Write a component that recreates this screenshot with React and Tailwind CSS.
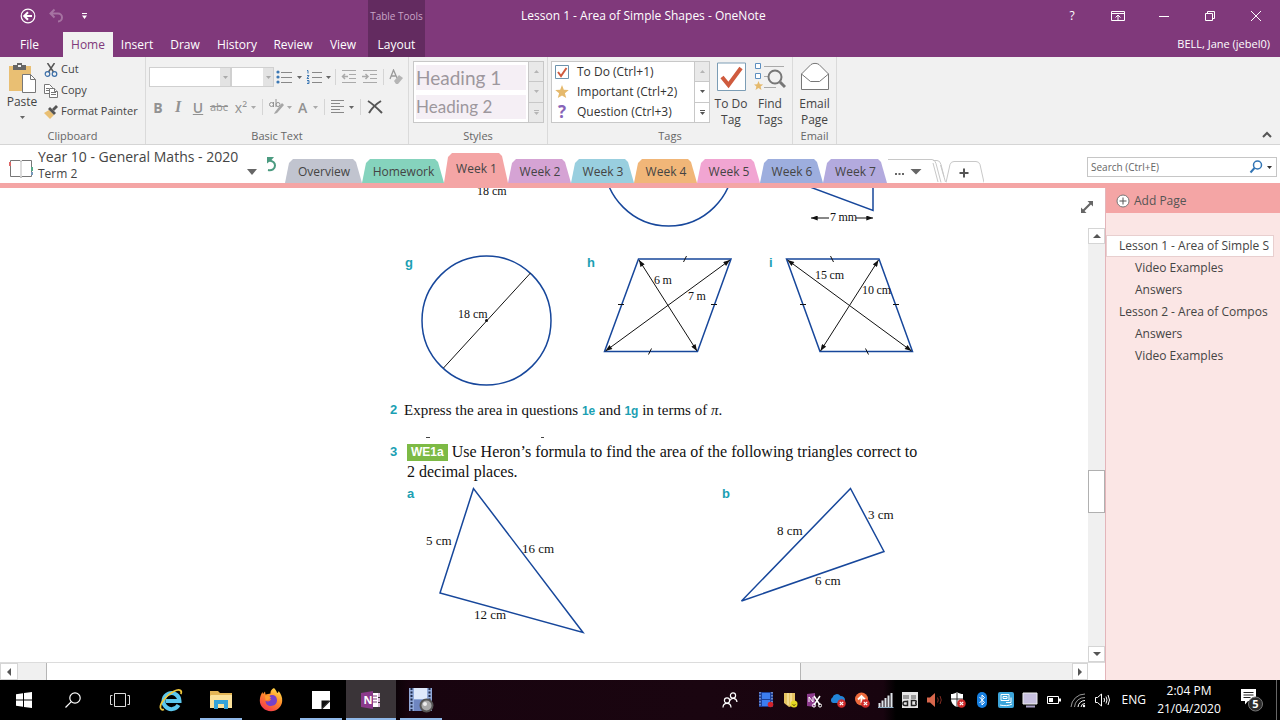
import React, { useState } from "react";

const menuTabs = [
    { name: "Home", width: "w-[50px]" },
    { name: "Insert", width: "w-12" },
    { name: "Draw", width: "w-12" },
    { name: "History", width: "w-14" },
    { name: "Review", width: "w-14" },
    { name: "View", width: "w-11" },
];

const sections = [
    { name: "Overview", color: "bg-[#c1c4cf]", width: "w-[78px]" },
    { name: "Homework", color: "bg-[#85d3bd]", width: "w-[83px]" },
    { name: "Week 1", color: "bg-[#f4a5a5]", width: "w-[65px]" },
    { name: "Week 2", color: "bg-[#d5a3d4]", width: "w-16" },
    { name: "Week 3", color: "bg-[#99cfdf]", width: "w-16" },
    { name: "Week 4", color: "bg-[#f1b678]", width: "w-16" },
    { name: "Week 5", color: "bg-[#f1a5d2]", width: "w-16" },
    { name: "Week 6", color: "bg-[#9daede]", width: "w-16" },
    { name: "Week 7", color: "bg-[#b3aade]", width: "w-[65px]" },
];

const pages = [
    { name: "Lesson 1 - Area of Simple S", sub: false },
    { name: "Video Examples", sub: true },
    { name: "Answers", sub: true },
    { name: "Lesson 2 - Area of Compos", sub: false },
    { name: "Answers", sub: true },
    { name: "Video Examples", sub: true },
];

function Caret({ className = "text-[#666]" }) {
    return (
        <svg viewBox="0 0 5 3" className={`h-[3px] w-[5px] shrink-0 ${className}`} fill="currentColor">
            <path d="M0 0h5L2.5 3z" />
        </svg>
    );
}

function Separator() {
    return <span className="h-4 w-px shrink-0 bg-[#d5d5d5]" />;
}

function TitleBar() {
    const [active, setActive] = useState("Home");

    return (
        <header className="flex h-[57px] shrink-0 bg-[#80397b] text-[12px] text-white">
            <div className="flex w-[368px] shrink-0 flex-col">
                <div className="flex h-8 items-center gap-3 pl-5">
                    <button aria-label="Back">
                        <svg viewBox="0 0 16 16" className="h-4 w-4" fill="none" stroke="currentColor">
                            <circle cx="8" cy="8" r="6.8" strokeWidth="1.2" />
                            <path d="M12 8H4.5M8 4.2 4.2 8 8 11.8" strokeWidth="2" />
                        </svg>
                    </button>
                    <button aria-label="Undo" className="text-[#a673a2]">
                        <svg viewBox="0 0 16 16" className="h-4 w-4" fill="none" stroke="currentColor" strokeWidth="2">
                            <path d="M2.5 5.5h7.5a4 4 0 0 1 0 8M6.5 1.5l-4 4 4 4" />
                        </svg>
                    </button>
                    <button aria-label="Customize toolbar" className="ml-[6px]">
                        <svg viewBox="0 0 5 6" className="h-[6px] w-[5px]" fill="currentColor">
                            <path d="M0 0h5v1H0zM0 2.5h5L2.5 6z" />
                        </svg>
                    </button>
                </div>
                <nav className="flex flex-1 items-stretch">
                    <button className="mr-1 w-[59px]">File</button>
                    {menuTabs.map((tab) => (
                        <button
                            key={tab.name}
                            onClick={() => setActive(tab.name)}
                            className={`${tab.width} ${active === tab.name ? "bg-[#f1f1f1] text-[#80397b]" : ""}`}
                        >
                            {tab.name}
                        </button>
                    ))}
                </nav>
            </div>
            <div className="flex w-[57px] shrink-0 flex-col items-center bg-[#632b60]">
                <div className="flex h-8 items-center whitespace-nowrap text-[10px] text-[#c9a5c7]">Table Tools</div>
                <button className="flex-1">Layout</button>
            </div>
            <h1 className="flex h-8 flex-1 items-center pl-24">Lesson 1 - Area of Simple Shapes - OneNote</h1>
            <div className="flex w-[240px] shrink-0 flex-col">
                <div className="flex h-8 items-center justify-end gap-[30px] pr-4">
                    <button className="w-4 text-[12px]">?</button>
                    <button aria-label="Ribbon display options">
                        <svg viewBox="0 0 16 16" className="h-4 w-4" fill="none" stroke="currentColor">
                            <path d="M1.5 3.5h13v9h-13zM1.5 5.5h13M8 12V7M5.5 9.5 8 7l2.5 2.5" />
                        </svg>
                    </button>
                    <button aria-label="Minimize">
                        <svg viewBox="0 0 16 16" className="h-4 w-4" stroke="currentColor">
                            <path d="M3 8.5h10" />
                        </svg>
                    </button>
                    <button aria-label="Restore">
                        <svg viewBox="0 0 16 16" className="h-4 w-4" fill="none" stroke="currentColor">
                            <path d="M3.5 5.5h7v7h-7zM5.5 5.5v-2h7v7h-2" />
                        </svg>
                    </button>
                    <button aria-label="Close">
                        <svg viewBox="0 0 16 16" className="h-4 w-4" stroke="currentColor">
                            <path d="m3 3 10 10M13 3 3 13" />
                        </svg>
                    </button>
                </div>
                <div className="flex flex-1 items-center justify-end pr-[10px] text-[11px]">BELL, Jane (jebel0)</div>
            </div>
        </header>
    );
}

function Group({ label, className, children }) {
    return (
        <section className={`flex shrink-0 flex-col border-r border-[#dadada] ${className}`}>
            <div className="flex-1">{children}</div>
            <div className="h-4 text-center text-[11px] leading-4 text-[#666]">{label}</div>
        </section>
    );
}

function ClipboardGroup() {
    return (
        <Group label="Clipboard" className="w-[146px]">
            <div className="flex pt-[2px]">
                <button className="flex w-11 shrink-0 flex-col items-center pt-1">
                    <svg viewBox="0 0 28 31" className="h-[31px] w-7">
                        <path d="M1 3h22v25H1z" fill="#e9bf73" />
                        <path d="M5 2h4V0h5v2h4v5H5z" fill="#666" />
                        <path d="M10 2h3v2h-3z" fill="#f1f1f1" />
                        <path d="M14.5 11.5h8l5 5v13h-13z" fill="#fff" stroke="#777" />
                        <path d="M22.5 11.5v5h5" fill="none" stroke="#777" />
                    </svg>
                    <span className="text-[12px] leading-4">Paste</span>
                    <Caret className="mt-[6px] text-[#666]" />
                </button>
                <div className="flex flex-col text-[11px] whitespace-nowrap">
                    <button className="flex h-[21px] items-center gap-[3px]">
                        <svg viewBox="0 0 14 14" className="h-[14px] w-[14px]" fill="none">
                            <path d="M3.5 0 9.5 9M10.5 0 4.5 9" stroke="#555" strokeWidth="1.5" />
                            <circle cx="3.5" cy="11" r="2.3" stroke="#3c6fa8" strokeWidth="1.2" />
                            <circle cx="10.5" cy="11" r="2.3" stroke="#3c6fa8" strokeWidth="1.2" />
                        </svg>
                        Cut
                    </button>
                    <button className="flex h-[21px] items-center gap-[3px]">
                        <svg viewBox="0 0 14 14" className="h-[14px] w-[14px]" fill="#fff" stroke="#777">
                            <path d="M.5.5h5l3 3v6h-8z" />
                            <path d="M2 4.5h3M2 6.5h3" />
                            <path d="M5.5 4.5h5l3 3v6h-8z" />
                            <path d="M7 8.5h5M7 10.5h5M10.5 4.5v3h3" />
                        </svg>
                        Copy
                    </button>
                    <button className="flex h-[21px] items-center gap-[3px]">
                        <svg viewBox="0 0 14 14" className="h-[14px] w-[14px]">
                            <path d="m0 8 5-3 5 5-4 4z" fill="#e9bf73" />
                            <path d="m4 4 2-2 6 6-2 2z" fill="#555" />
                            <path d="m8 4 4-4 2 2-4 4z" fill="#555" />
                        </svg>
                        Format Painter
                    </button>
                </div>
            </div>
        </Group>
    );
}

function FontSelect({ label, className }) {
    return (
        <span className={`relative flex h-5 shrink-0 items-stretch border border-[#d0d0d0] ${className}`}>
            <select aria-label={label} className="w-full appearance-none bg-white" />
            <span className="pointer-events-none absolute inset-y-0 right-0 flex w-[10px] items-center justify-center bg-[#e3e3e3]">
                <Caret className="text-[#aaa]" />
            </span>
        </span>
    );
}

function BasicTextGroup() {
    return (
        <Group label="Basic Text" className="w-[263px]">
            <div className="mt-[10px] flex h-5 items-center pl-[3px]">
                <FontSelect label="Font" className="w-[82px]" />
                <FontSelect label="Font size" className="w-[43px]" />
                <button aria-label="Bullets" className="ml-[2px] flex items-center gap-[5px]">
                    <svg viewBox="0 0 16 16" className="h-4 w-4">
                        <path d="M5 3.5h11M5 8.5h11M5 13.5h11" stroke="#888" />
                        <g fill="#3c78b4">
                            <circle cx="2" cy="3" r="1.6" />
                            <circle cx="2" cy="8" r="1.6" />
                            <circle cx="2" cy="13" r="1.6" />
                        </g>
                    </svg>
                    <Caret />
                </button>
                <button aria-label="Numbering" className="ml-[4px] flex items-center gap-[4px]">
                    <svg viewBox="0 0 16 16" className="h-4 w-4" fill="none">
                        <path d="M6 3.5h10M6 8.5h10M6 13.5h10" stroke="#888" />
                        <path d="M1 1.5h1v3M1 6.5h2l-2 3h2M1 11.5h2v3H1M1.5 13h1" stroke="#3c78b4" />
                    </svg>
                    <Caret />
                </button>
                <span className="ml-1 flex items-center gap-[5px]">
                    <Separator />
                    <button aria-label="Decrease indent">
                        <svg viewBox="0 0 16 16" className="h-4 w-4" stroke="#aaa" fill="none">
                            <path d="M1 1.5h14M8 5.5h7M8 9.5h7M1 13.5h14" />
                            <path d="M1.5 7.5H7M4 5 1.5 7.5 4 10" strokeWidth="1.5" />
                        </svg>
                    </button>
                    <button aria-label="Increase indent">
                        <svg viewBox="0 0 16 16" className="h-4 w-4" stroke="#aaa" fill="none">
                            <path d="M1 1.5h14M8 5.5h7M8 9.5h7M1 13.5h14" />
                            <path d="M0 7.5h6M3.5 5 6 7.5 3.5 10" strokeWidth="1.5" />
                        </svg>
                    </button>
                    <Separator />
                    <button aria-label="Clear formatting">
                        <svg viewBox="0 0 16 16" className="h-4 w-4" fill="none">
                            <path d="m1 10 3.5-9L8 9M2.5 7h4" stroke="#999" strokeWidth="1.3" />
                            <path d="m5 12 5-6 4 3-5 6H7z" fill="#b5b5b5" />
                        </svg>
                    </button>
                </span>
            </div>
            <div className="mt-[10px] flex h-5 items-center pl-[2px] text-[14px] text-[#929292]">
                <button className="w-5 font-bold">B</button>
                <button className="w-5 font-['Liberation_Serif',serif] text-[16px] font-bold italic">I</button>
                <button className="w-5 font-semibold underline">U</button>
                <button className="w-[22px] text-[11px] line-through">abc</button>
                <button className="flex w-[26px] items-center justify-end gap-1">
                    x²
                    <Caret className="text-[#aaa]" />
                </button>
                <span className="ml-[6px] flex items-center gap-[6px]">
                    <Separator />
                    <button aria-label="Highlight" className="flex items-center gap-[2px]">
                        <svg viewBox="0 0 16 16" className="h-4 w-4 overflow-visible" fill="none">
                            <circle cx="2.5" cy="5.5" r="2" stroke="#929292" />
                            <path d="M4.5 3v5M7 0v8" stroke="#929292" />
                            <circle cx="9" cy="5.5" r="2" stroke="#929292" />
                            <path d="m6 13 7-9 2 2-7 8-3 1z" fill="#a5a5a5" />
                        </svg>
                        <Caret className="text-[#aaa]" />
                    </button>
                    <button className="flex items-center gap-[6px] font-semibold">
                        A
                        <Caret className="text-[#aaa]" />
                    </button>
                    <Separator />
                    <button aria-label="Align" className="flex items-center gap-1">
                        <svg viewBox="0 0 14 14" className="h-[14px] w-[14px]" stroke="#888">
                            <path d="M0 .5h13M0 3.5h9M0 6.5h13M0 9.5h9M0 12.5h13" />
                        </svg>
                        <Caret />
                    </button>
                    <Separator />
                    <button aria-label="Delete">
                        <svg viewBox="0 0 16 14" className="h-[14px] w-4" stroke="#555" strokeWidth="2" fill="none">
                            <path d="M1 1c5 3 9 7 14 12M14 1C9 4 5 8 2 13" />
                        </svg>
                    </button>
                </span>
            </div>
        </Group>
    );
}

function GalleryScroll({ disabled }) {
    const arrow = disabled ? "text-[#b5b5b5]" : "text-[#555]";
    const cell = disabled ? "bg-[#e9e9e9]" : "bg-white";
    return (
        <div className="flex w-[15px] shrink-0 flex-col divide-y divide-[#c8c8c8] border-l border-[#c8c8c8]">
            <button aria-label="Scroll up" className="flex flex-1 items-center justify-center bg-[#e9e9e9]">
                <Caret className="rotate-180 text-[#b5b5b5]" />
            </button>
            <button aria-label="Scroll down" className={`flex flex-1 items-center justify-center ${cell}`}>
                <Caret className={arrow} />
            </button>
            <button aria-label="More" className={`flex flex-1 flex-col items-center justify-center gap-px ${cell} ${arrow}`}>
                <span className="h-px w-[5px] bg-current" />
                <Caret className={arrow} />
            </button>
        </div>
    );
}

function StylesGroup() {
    return (
        <Group label="Styles" className="w-[139px]">
            <div className="mt-1 ml-1 flex h-[62px] w-[131px] border border-[#c8c8c8] bg-white">
                <div className="flex flex-1 flex-col justify-between px-[2px] py-[3px] font-[Lato,sans-serif] text-[#9d979d]">
                    <button className="h-[25px] bg-[#f5eff5] text-left text-[19px] leading-6">Heading 1</button>
                    <button className="h-6 bg-[#f5eff5] text-left text-[17px] leading-6">Heading 2</button>
                </div>
                <GalleryScroll disabled />
            </div>
        </Group>
    );
}

function TagsGroup() {
    return (
        <Group label="Tags" className="w-[245px]">
            <div className="flex">
                <div className="mt-1 ml-[3px] flex h-[62px] w-[159px] shrink-0 border border-[#c8c8c8] bg-white text-[#333]">
                    <div className="flex flex-1 flex-col">
                        <button className="flex h-5 items-center gap-[7px] pl-[2px]">
                            <svg viewBox="0 0 16 16" className="h-4 w-4 shrink-0" fill="none">
                                <path d="M1.5 1.5h13v13h-13z" stroke="#6d93ad" fill="#fff" />
                                <path d="m4 8 3 4 5.5-8" stroke="#cf5b3e" strokeWidth="2" />
                            </svg>
                            To Do (Ctrl+1)
                        </button>
                        <button className="flex h-5 items-center gap-[7px] pl-[2px]">
                            <svg viewBox="0 0 16 16" className="h-4 w-4 shrink-0" fill="#e5b96c">
                                <path d="m8 1 1.8 4.7 5 .3-3.9 3.2 1.3 4.9L8 11.4l-4.200 2.700 1.300-4.900L1.200 6l5-.3z" />
                            </svg>
                            Important (Ctrl+2)
                        </button>
                        <button className="flex h-5 items-center gap-[7px] pl-[2px]">
                            <span className="w-4 text-center text-[17px] leading-5 font-bold text-[#8764b8]">?</span>
                            Question (Ctrl+3)
                        </button>
                    </div>
                    <GalleryScroll />
                </div>
                <button className="mt-[5px] flex w-[42px] flex-col items-center text-[12px] leading-4">
                    <svg viewBox="0 0 29 30" className="mb-1 h-[30px] w-[29px]" fill="none">
                        <path d="M.5 1h28v27.5H.5z" fill="#fff" stroke="#7c9db5" />
                        <path d="m5 15 6.5 8L24 6" stroke="#cf5b3e" strokeWidth="4" />
                    </svg>
                    <span>To Do</span>
                    <span>Tag</span>
                </button>
                <button className="mt-[5px] flex w-9 flex-col items-center text-[12px] leading-4">
                    <svg viewBox="0 0 32 30" className="mb-1 h-[30px] w-8" fill="none">
                        <path d="M1.5 1.5h5v5h-5zM1.5 11.5h5v5h-5z" stroke="#5d8fc0" fill="#fff" />
                        <path d="M10 4.5h20M10 14.5h6M10 25.5h12" stroke="#aaa" />
                        <circle cx="21" cy="15" r="6.5" stroke="#777" strokeWidth="2" fill="#f1f1f1" />
                        <path d="m26 20 5 5" stroke="#777" strokeWidth="3" />
                        <path d="m4.5 19 1.3 3.2 3.4.2-2.6 2.2.9 3.4-3-1.9L1.500 28l.9-3.400L0 22.400l3.200-.2z" fill="#e5b96c" />
                    </svg>
                    <span>Find</span>
                    <span>Tags</span>
                </button>
            </div>
        </Group>
    );
}

function EmailGroup() {
    return (
        <Group label="Email" className="w-11">
            <button className="mt-[5px] flex w-full flex-col items-center text-[12px] leading-4">
                <svg viewBox="0 0 30 30" className="mb-1 h-[30px] w-[30px]" fill="#fff" stroke="#777">
                    <path d="M1.5 12 11 2.5c2-1.5 6-1.5 8 0L28.5 12v15.500h-27z" />
                    <path d="m1.5 12 9 7.5h9l9-7.5" fill="none" />
                </svg>
                <span>Email</span>
                <span>Page</span>
            </button>
        </Group>
    );
}

function Ribbon() {
    return (
        <div className="flex h-[88px] shrink-0 border-b border-[#d5d5d5] bg-[#f1f1f1] text-[12px] text-[#444]">
            <ClipboardGroup />
            <BasicTextGroup />
            <StylesGroup />
            <TagsGroup />
            <EmailGroup />
            <button aria-label="Collapse ribbon" className="mr-2 mb-1 ml-auto self-end">
                <svg viewBox="0 0 10 10" className="h-[10px] w-[10px]" fill="none" stroke="#555" strokeWidth="2">
                    <path d="m1 7 4-4 4 4" />
                </svg>
            </button>
        </div>
    );
}

function SectionBar() {
    const [active, setActive] = useState("Week 1");

    return (
        <div className="flex h-[43px] shrink-0 border-b-[5px] border-[#f4a5a5] bg-white text-[#444]">
            <button className="flex w-[257px] shrink-0 items-end pl-2 text-left">
                <svg viewBox="0 0 26 20" className="mb-1 h-5 w-[26px] shrink-0" fill="none" stroke="#777">
                    <path d="M2.5 1.5h9.500l1 1 1-1h9.500v16H14l-1 1-1-1H2.500z" />
                    <path d="M13 3v15" stroke="#bbb" />
                    <path d="M2 3v4" stroke="#d66" strokeWidth="2" />
                    <path d="M24 8v4" stroke="#5a8" strokeWidth="2" />
                    <path d="M24 13v3" stroke="#79b" strokeWidth="2" />
                </svg>
                <span className="ml-1 flex flex-1 flex-col self-start pt-[2px] whitespace-nowrap">
                    <span className="text-[14px] leading-[19px]">Year 10 - General Maths - 2020</span>
                    <span className="text-[12px] leading-4">Term 2</span>
                </span>
                <svg viewBox="0 0 10 6" className="mb-2 h-[6px] w-[10px] shrink-0" fill="#666">
                    <path d="M0 0h10L5 6z" />
                </svg>
            </button>
            <button aria-label="Sync status" className="mr-[6px] ml-[7px] w-[15px]">
                <svg viewBox="0 0 15 18" className="h-[18px] w-[15px]" fill="none" stroke="#4b9b80" strokeWidth="2">
                    <path d="M4 15c4 .8 7-1 7-4.500 0-3-2.500-4.500-6-5" />
                    <path d="M3 2v6.500L7.500 5 10 2z" fill="#4b9b80" stroke="none" />
                </svg>
            </button>
            <nav className="flex items-end text-[12px]">
                {sections.map((s) => (
                    <button
                        key={s.name}
                        onClick={() => setActive(s.name)}
                        className={`-mr-px shrink-0 pt-[2px] [clip-path:polygon(0_100%,4px_4px,8px_0,calc(100%-10px)_0,calc(100%-7px)_3px,calc(100%-1px)_100%)] ${s.width} ${s.color} ${active === s.name ? "h-[30px]" : "h-6"}`}
                    >
                        {s.name}
                    </button>
                ))}
                <button aria-label="More sections" className="ml-px flex h-6 w-[58px] items-center">
                    <svg viewBox="0 0 58 24" className="h-6 w-[58px]" fill="none" stroke="#c8c8c8">
                        <path d="M0 .5h44q3 0 4 4l5 19M45 1.5h4q3 0 4 4l3 12M50 23l-5-19M57.5 23l-5-17" />
                        <g fill="#666" stroke="none">
                            <path d="M7 14h2v2H7zM10.5 14h2v2h-2zM14 14h2v2h-2zM22.5 10h11L28 15.5z" />
                        </g>
                    </svg>
                </button>
                <button aria-label="New section" className="h-6">
                    <svg viewBox="0 0 38 24" className="h-6 w-[38px]" fill="none" stroke="#c8c8c8">
                        <path d="m0 23.5 4-18q1-3 4-3h22q3 0 4 3l4 18" />
                        <path d="M18 9.5v9M13.5 14h9" stroke="#555" strokeWidth="2" />
                    </svg>
                </button>
            </nav>
            <div className="mt-3 mr-[3px] ml-auto flex h-5 w-[190px] shrink-0 items-center border border-[#c6c6c6] pr-1">
                <input
                    type="text"
                    aria-label="Search"
                    placeholder="Search (Ctrl+E)"
                    className="min-w-0 flex-1 pl-[3px] text-[10px] outline-none placeholder:text-[#666]"
                />
                <button aria-label="Search notes" className="flex items-center gap-1">
                    <svg viewBox="0 0 14 14" className="h-[14px] w-[14px]" fill="none" stroke="#3174b4">
                        <circle cx="8.5" cy="5" r="4" strokeWidth="1.5" />
                        <path d="M5.5 8 1.5 12.5" strokeWidth="2" />
                    </svg>
                    <Caret className="text-[#333]" />
                </button>
            </div>
        </div>
    );
}

// Questions 1d to 1i
function AreaFigures() {
    return (
        <svg viewBox="388 188 560 210" className="block h-[210px] w-[560px]" fill="none">
            <defs>
                <marker id="tip" viewBox="0 0 8 6" refX="8" refY="3" markerWidth="8" markerHeight="5" orient="auto-start-reverse">
                    <path d="M0 0 8 3 0 6z" fill="#111" />
                </marker>
            </defs>
            <g stroke="#17479b" strokeWidth="1.5">
                <circle cx="668.7" cy="161.5" r="64.5" />
                <path d="M810 187l63 23.5V180" />
                <circle cx="486.5" cy="320.5" r="64.5" />
                <path d="M638.5 259h92.5l-33.5 92.5h-93z" />
                <path d="M786.5 259H879l33.5 92.5H820z" />
            </g>
            <g stroke="#111" strokeWidth="1">
                <path d="M530.5 273 443.5 368" />
                <path d="M683.5 262l3-6M648.5 354.5l3-6M618 304.5h6M711 304.5h6" />
                <path d="M830.5 256l3 6M865.5 348.5l3 6M800 304.5h6M893 304.5h6" />
                <path d="M639 260l58 91" markerStart="url(#tip)" markerEnd="url(#tip)" />
                <path d="M730 260 605.5 351" markerStart="url(#tip)" markerEnd="url(#tip)" />
                <path d="M787.5 260l124 91" markerStart="url(#tip)" markerEnd="url(#tip)" />
                <path d="M878.5 260l-58 91" markerStart="url(#tip)" markerEnd="url(#tip)" />
                <path d="M829 218h-18" markerEnd="url(#tip)" />
                <path d="M856 218h17" markerEnd="url(#tip)" />
            </g>
            <circle cx="486.5" cy="320.5" r="1.5" fill="#111" />
            <g className="font-['Liberation_Serif',serif] text-[12px]" fill="#111">
                <text x="477" y="195">18 cm</text>
                <text x="830" y="221">7&#8201;mm</text>
                <text x="458" y="318">18 cm</text>
                <text x="654" y="284">6&#8201;m</text>
                <text x="688" y="300">7&#8201;m</text>
                <text x="815" y="279">15&#8201;cm</text>
                <text x="862" y="294">10&#8201;cm</text>
            </g>
            <g className="font-['Liberation_Sans',sans-serif] text-[13px] font-bold" fill="#1b9fb3">
                <text x="405" y="267">g</text>
                <text x="587" y="267">h</text>
                <text x="769" y="267">i</text>
            </g>
        </svg>
    );
}

// Question 3 triangles
function TriangleFigures() {
    return (
        <svg viewBox="388 482 560 160" className="block h-40 w-[560px]" fill="none">
            <g stroke="#17479b" strokeWidth="1.5">
                <path d="M473.5 488.5 440 593l143 39.5z" />
                <path d="M850.5 488.5 884 551.5 741.5 601z" />
            </g>
            <g className="font-['Liberation_Serif',serif] text-[13px]" fill="#111">
                <text x="426" y="545">5 cm</text>
                <text x="522" y="553">16 cm</text>
                <text x="474" y="619">12 cm</text>
                <text x="777" y="535">8 cm</text>
                <text x="868" y="519">3 cm</text>
                <text x="815" y="585">6 cm</text>
            </g>
            <g className="font-['Liberation_Sans',sans-serif] text-[13px] font-bold" fill="#1b9fb3">
                <text x="407" y="498">a</text>
                <text x="722" y="498">b</text>
            </g>
        </svg>
    );
}

function Question({ number, className, children }) {
    return (
        <div className={`flex font-['Liberation_Serif',serif] text-[#111] ${className}`}>
            <b className="w-4 shrink-0 pl-[2px] font-['Liberation_Sans',sans-serif] text-[13px] text-[#1b9fb3]">{number}</b>
            {children}
        </div>
    );
}

function ScrollButton({ label, className, rotate }) {
    return (
        <button aria-label={label} className={`flex shrink-0 items-center justify-center border border-[#d5d5d5] bg-white ${className}`}>
            <svg viewBox="0 0 8 4" className={`h-1 w-2 ${rotate}`} fill="#555">
                <path d="M0 4h8L4 0z" />
            </svg>
        </button>
    );
}

function NotePage() {
    return (
        <main className="flex min-w-0 flex-1 flex-col bg-white">
            <div className="relative flex min-h-0 flex-1">
                <div className="min-w-0 flex-1 overflow-hidden pl-[388px]">
                    <AreaFigures />
                    <Question number="2" className="h-6 items-center text-[15px]">
                        <p>
                            Express the area in questions{" "}
                            <b className="font-['Liberation_Sans',sans-serif] text-[12px] text-[#1b9fb3]">1e</b> and{" "}
                            <b className="font-['Liberation_Sans',sans-serif] text-[12px] text-[#1b9fb3]">1g</b> in terms of{" "}
                            <i>π</i>.
                        </p>
                    </Question>
                    {/* leftover edge of the pasted strip above question 3 */}
                    <svg viewBox="0 0 560 20" className="block h-5 w-[560px]" stroke="#444">
                        <path d="M38 15.5h4M153 15.5h3" />
                    </svg>
                    <Question number="3" className="text-[16px] leading-5">
                        <div className="flex flex-col pl-[3px] whitespace-nowrap">
                            <p className="flex items-center gap-1">
                                <b className="bg-[#7dba45] px-1 font-['Liberation_Sans',sans-serif] text-[12px] leading-[17px] text-white">
                                    WE1a
                                </b>
                                Use Heron’s formula to find the area of the following triangles correct to
                            </p>
                            <p>2 decimal places.</p>
                        </div>
                    </Question>
                    <TriangleFigures />
                </div>
                <button aria-label="Full page view" className="absolute top-[13px] right-3">
                    <svg viewBox="0 0 12 12" className="h-3 w-3" fill="#666">
                        <path d="M12 0v5.500l-2-2L3.500 10l2 2H0V6.500l2 2L8.500 2l-2-2z" />
                    </svg>
                </button>
                <div className="mt-10 flex w-[17px] shrink-0 flex-col bg-[#f0f0f0]">
                    <ScrollButton label="Scroll up" className="h-4" rotate="" />
                    <div className="grow-[17]" />
                    <div className="h-[43px] border border-[#b0b0b0] bg-white" />
                    <div className="grow-[10]" />
                    <ScrollButton label="Scroll down" className="h-4" rotate="rotate-180" />
                </div>
            </div>
            <div className="flex h-[18px] shrink-0 border-t border-[#dcdcdc] bg-[#f0f0f0]">
                <ScrollButton label="Scroll left" className="w-[18px]" rotate="-rotate-90" />
                <div className="grow-[1] basis-0" />
                <div className="grow-[27] basis-0 border-x border-[#b5b5b5] bg-white" />
                <div className="grow-[9] basis-5" />
                <ScrollButton label="Scroll right" className="w-4" rotate="rotate-90" />
                <div className="w-[17px] bg-white" />
            </div>
        </main>
    );
}

function PageList() {
    const [current, setCurrent] = useState(0);

    return (
        <aside className="w-[175px] shrink-0 border-l border-[#e3b5ba] bg-[#fbe6e5] text-[12px] text-[#444]">
            <button className="mb-[22px] flex h-[25px] w-full items-center gap-1 bg-[#f4a5a5] pl-[10px] text-[12px] text-[#555]">
                <svg viewBox="0 0 14 14" className="h-[14px] w-[14px]" fill="#fff" stroke="#777">
                    <circle cx="7" cy="7" r="6" />
                    <path d="M7 3.5v7M3.5 7h7" stroke="#555" />
                </svg>
                Add Page
            </button>
            <ul className="mr-[6px]">
                {pages.map((page, i) => (
                    <li key={i}>
                        <button
                            onClick={() => setCurrent(i)}
                            className={`block h-[22px] w-full border text-left leading-5 whitespace-nowrap ${page.sub ? "pl-7" : "pl-3"} ${current === i ? "border-[#e8cfcf] bg-white" : "border-transparent"}`}
                        >
                            {page.name}
                        </button>
                    </li>
                ))}
            </ul>
        </aside>
    );
}

function TaskButton({ label, className = "w-[50px]", open, active, children }) {
    return (
        <button aria-label={label} className={`relative flex h-full shrink-0 items-center justify-center ${className} ${active ? "bg-[#3a3438]" : ""}`}>
            {children}
            {open && <span className={`absolute bottom-0 h-[2px] bg-[#8fb8e8] ${active ? "inset-x-0" : "inset-x-1"}`} />}
        </button>
    );
}

function Tray({ label, children }) {
    return (
        <button aria-label={label} className="flex w-6 shrink-0 justify-center">
            <svg viewBox="0 0 16 16" className="h-4 w-4" fill="none">
                {children}
            </svg>
        </button>
    );
}

function ErrorBadge() {
    return (
        <>
            <circle cx="11.5" cy="11.5" r="4.3" fill="#cf2b2b" />
            <path d="m9.8 9.8 3.4 3.4M13.2 9.8l-3.4 3.4" stroke="#fff" strokeWidth="1.2" />
        </>
    );
}

function Taskbar() {
    return (
        <footer className="flex h-10 shrink-0 items-center bg-[linear-gradient(90deg,#000_30%,#18040f_32%,#1a0510_55%,#18040f_69%,#000_70%)] text-white">
            <TaskButton label="Start" className="w-12">
                <svg viewBox="0 0 16 16" className="h-4 w-4" fill="#fff">
                    <path d="M0 2.2 7 1.2v6.3H0zM8 1l8-1v7.5H8zM0 8.5h7v6.3l-7-1zM8 8.5h8V16l-8-1z" />
                </svg>
            </TaskButton>
            <TaskButton label="Search">
                <svg viewBox="0 0 16 16" className="h-4 w-4" fill="none" stroke="#fff" strokeWidth="1.2">
                    <circle cx="10" cy="6" r="5.2" />
                    <path d="M6.3 9.7.5 15.5" />
                </svg>
            </TaskButton>
            <TaskButton label="Task View" className="w-11">
                <svg viewBox="0 0 20 16" className="h-4 w-5" fill="none" stroke="#ddd">
                    <path d="M4.5 1.5h11v13h-11zM2.5 3.5h-2v9h2M17.5 3.5h2v9h-2" />
                </svg>
            </TaskButton>
            <TaskButton label="Internet Explorer" className="ml-1 w-[50px]">
                <svg viewBox="0 0 24 24" className="h-6 w-6" fill="none">
                    <path d="M19.5 17A8 8 0 1 1 20.5 13H7" stroke="#5cc8ee" strokeWidth="4" />
                    <path d="M5 21.5C1 23-.5 18 5 11.5 11 4 19 .5 21.5 2.5c1 .8.8 2.5.3 3.5" stroke="#efc73c" strokeWidth="1.8" />
                </svg>
            </TaskButton>
            <TaskButton label="File Explorer" open>
                <svg viewBox="0 0 22 20" className="h-5 w-[22px]">
                    <path d="M0 1h8l2 2h12v15H0z" fill="#e3b556" />
                    <path d="M1 5h21v13H0V6z" fill="#fbe19a" />
                    <path d="M4 10h14v9h-4v-5H8v5H4z" fill="#35a3d9" />
                </svg>
            </TaskButton>
            <TaskButton label="Firefox">
                <svg viewBox="0 0 24 24" className="h-6 w-6">
                    <defs>
                        <linearGradient id="fox" x1="0.8" y1="0" x2="0.2" y2="1">
                            <stop offset="0" stopColor="#ffe14a" />
                            <stop offset="0.45" stopColor="#ff8a2a" />
                            <stop offset="1" stopColor="#f4314f" />
                        </linearGradient>
                    </defs>
                    <path d="M15 0c2 2 3 4 3 5 1-.3 1.5-1 1.6-2C22 6 23.5 9 23.2 13c-.4 6-5 10.2-11.2 10.2S.8 18.5.8 12.5C.8 9 2 6 3.5 4l.5 2 2-2.5.5 3 5-1c-.5-2 1-4.5 3.5-5.5z" fill="url(#fox)" />
                    <path d="M11 7.5c4-1.5 7 1 7 4.8s-3 5.7-6 5.7-5.5-2-5.5-5c3 1 5 .2 5.5-2l-2.5-.5z" fill="#7541c9" />
                    <path d="M6 8c2-1 4 0 6 1.5C10.5 11 9 13 6.5 12z" fill="#ff9d2e" />
                </svg>
            </TaskButton>
            <TaskButton label="Sticky Notes" open>
                <svg viewBox="0 0 18 18" className="h-[18px] w-[18px]">
                    <path d="M0 0h18v9.5L9.5 18H0z" fill="#fff" />
                    <path d="M9.5 9.5H18L9.5 18z" fill="#111" />
                    <path d="M18 10.5V18h-7.5z" fill="#fff" />
                </svg>
            </TaskButton>
            <TaskButton label="OneNote" open active>
                <svg viewBox="0 0 20 18" className="h-[18px] w-5">
                    <path d="M11 2h6v14h-6z" fill="#fff" />
                    <path d="M17 2h2v4h-2zM17 7h2v4h-2zM17 12h2v4h-2z" fill="#d9b7d7" />
                    <path d="M12 5h4M12 8h4M12 11h4" stroke="#80397b" />
                    <path d="m0 2 12-2v18L0 16z" fill="#8b3a8b" />
                    <text x="2.5" y="13" fontSize="11" fontWeight="bold" fill="#fff">N</text>
                </svg>
            </TaskButton>
            <TaskButton label="Video recorder" open>
                <svg viewBox="0 0 26 26" className="h-[26px] w-[26px]">
                    <path d="M1 1h23v23H1z" fill="#91a9d9" />
                    <path d="M6 1h13v11H6z" fill="#dfe9fb" />
                    <path d="M6 13h13v11H6z" fill="#6f86c0" />
                    <path d="M3.5 1v23M21.5 1v23" stroke="#1e2949" strokeWidth="2" strokeDasharray="2 1.5" />
                    <circle cx="18.5" cy="18.5" r="7" fill="#555" />
                    <circle cx="18.5" cy="18.5" r="5" fill="#aaa" />
                    <circle cx="17" cy="17" r="2" fill="#eee" />
                </svg>
            </TaskButton>

            <div className="ml-auto flex h-full items-center">
                <button aria-label="People" className="mr-4">
                    <svg viewBox="0 0 16 16" className="h-4 w-4" fill="none" stroke="#fff" strokeWidth="1.2">
                        <circle cx="11" cy="3.5" r="2.6" />
                        <path d="M8 8.5c1-3 6.5-3 7 1.5" />
                        <circle cx="5" cy="8.5" r="2.6" />
                        <path d="M1 15.5c0-5.5 8-5.5 8 0" />
                    </svg>
                </button>
                <Tray label="Recorder">
                    <path d="M1 0h14v15H1z" fill="#1c3f96" />
                    <path d="M4 1h8v6H4zM4 8h8v6H4z" fill="#3c7df0" />
                    <path d="M2 0v15M14 0v15" stroke="#bcd0f5" strokeDasharray="1.5 1.5" />
                    <circle cx="12.5" cy="12.5" r="2.8" fill="#d3232c" />
                </Tray>
                <Tray label="Folder sync">
                    <path d="M2 1h11v12l-6 2-5-4z" fill="#e6c362" />
                    <path d="M6 1v12M9 1v12" stroke="#fff1b8" />
                    <circle cx="12" cy="12" r="3.5" fill="#e5d724" />
                    <path d="M10.5 12.5q1.5 2 3 0" stroke="#665500" />
                </Tray>
                <Tray label="OneNote clipper">
                    <path d="m1 2 8-1v14l-8-1z" fill="#8b3a8b" />
                    <path d="M3 10V5l4 5V5" stroke="#fff" />
                    <path d="m8 4 6 9M14 4l-6 9" stroke="#fff" strokeWidth="1.5" />
                    <circle cx="8" cy="13.5" r="1.6" stroke="#fff" />
                    <circle cx="14" cy="13.5" r="1.6" stroke="#fff" />
                </Tray>
                <Tray label="OneDrive">
                    <path d="M3 11a3 3 0 0 1-.5-5.5A4.5 4.5 0 0 1 10.5 4 4 4 0 0 1 15 8v3z" fill="#2285d8" />
                    <ErrorBadge />
                </Tray>
                <Tray label="Update">
                    <circle cx="7.5" cy="7" r="6.5" fill="#ed6a3c" />
                    <path d="M4 7.5 7.5 4 11 7.5M7.5 4.5V11" stroke="#fff" strokeWidth="1.8" />
                    <ErrorBadge />
                </Tray>
                <Tray label="Signal">
                    <path d="M1.5 15v-4M4.5 15V8.5M7.5 15V6M10.5 15V3.5M13.5 15V1" stroke="#dfe5ea" strokeWidth="2" />
                    <path d="M0 15.5h15.5" stroke="#8fb2c8" />
                </Tray>
                <Tray label="Dolby">
                    <path d="M0 0h16v16H0z" fill="#e4e4e4" />
                    <path d="M1 3h6v4H1zM9 3h5v4H9z" fill="#999" />
                    <path d="M5.5 8.5v5H3a2 2 0 0 1 0-4h2.5" stroke="#222" strokeWidth="1.5" />
                    <path d="M9.5 8.5v5H13a1.2 1.2 0 0 0 0-2.5 1.2 1.2 0 0 0 0-2.5z" stroke="#222" strokeWidth="1.5" />
                </Tray>
                <Tray label="Audio manager">
                    <path d="M1 5.5h3L9 1v14L4 10.5H1z" fill="#d8674c" />
                    <path d="M11.5 5.5q1.5 2.5 0 5M14 4q2.5 4 0 8" stroke="#812c22" />
                </Tray>
                <Tray label="Security">
                    <path d="M7 0c2 1.5 4 2 6 2v5c0 4-3 7-6 8-3-1-6-4-6-8V2c2 0 4-.5 6-2z" fill="#fff" />
                    <path d="M7 0v15M1 7h12" stroke="#333" />
                    <ErrorBadge />
                </Tray>
                <Tray label="Bluetooth">
                    <rect x="3" width="10" height="16" rx="5" fill="#167fe0" />
                    <path d="m5.5 5 5 5.5L8 13V3l2.5 2.5-5 5.5" stroke="#fff" />
                </Tray>
                <Tray label="Graphics">
                    <rect width="16" height="16" rx="2" fill="#3ca5da" />
                    <path d="M3 2.5h8v6H3zM5 4.5h4v2H5zM8 10.5h5v-5M2 13c4 1 9 1 12-1" stroke="#fff" />
                </Tray>
                <Tray label="Display">
                    <path d="M1 1h14v11H1z" fill="#c7c0df" stroke="#eee" />
                    <path d="M4 14.5h9" stroke="#a69fc4" strokeWidth="2" />
                </Tray>
                <Tray label="Battery">
                    <path d="M1.5 4.5h11v7h-11z" stroke="#fff" />
                    <path d="M3 6h4v4H3zM13 6.5h2v3h-2z" fill="#fff" />
                </Tray>
                <Tray label="Wi-Fi">
                    <path d="M1 15A14 14 0 0 1 15 2M4.5 15A10 10 0 0 1 15 5.5" stroke="#999" />
                    <path d="M8 15a7 7 0 0 1 7-6.5M11 15a4 4 0 0 1 4-3.5" stroke="#fff" />
                    <circle cx="14" cy="14" r="1.2" fill="#fff" />
                </Tray>
                <Tray label="Volume">
                    <path d="M1.5 5.5h2L7.5 2v12l-4-3.5h-2zM10 6q1 2 0 4M12 4.5q2 3.5 0 7M14 3q3 5 0 10" stroke="#fff" />
                </Tray>
                <span className="ml-2 text-[12px]">ENG</span>
                <div className="w-[86px] text-center text-[12px] leading-[18px]">
                    2:04 PM
                    <br />
                    21/04/2020
                </div>
                <button aria-label="5 new notifications" className="ml-2">
                    <svg viewBox="0 0 24 24" className="h-6 w-6">
                        <path d="M1 1h15v12H8l-3 3.5V13H1z" fill="#fff" />
                        <path d="M3.5 4.5h10M3.5 7h10M3.5 9.5h7" stroke="#222" />
                        <circle cx="15.5" cy="16" r="7" fill="#2c2c2c" stroke="#777" />
                        <text x="15.5" y="20" textAnchor="middle" fontSize="11" fontWeight="bold" fill="#fff">5</text>
                    </svg>
                </button>
                <button aria-label="Show desktop" className="ml-3 h-full w-1 border-l border-[#666]" />
            </div>
        </footer>
    );
}

function App() {
    return (
        <div className="flex h-screen flex-col overflow-hidden bg-white font-['Open_Sans','Noto_Sans',sans-serif]">
            <TitleBar />
            <Ribbon />
            <SectionBar />
            <div className="flex min-h-0 flex-1">
                <NotePage />
                <PageList />
            </div>
            <Taskbar />
        </div>
    );
}

export default App;
